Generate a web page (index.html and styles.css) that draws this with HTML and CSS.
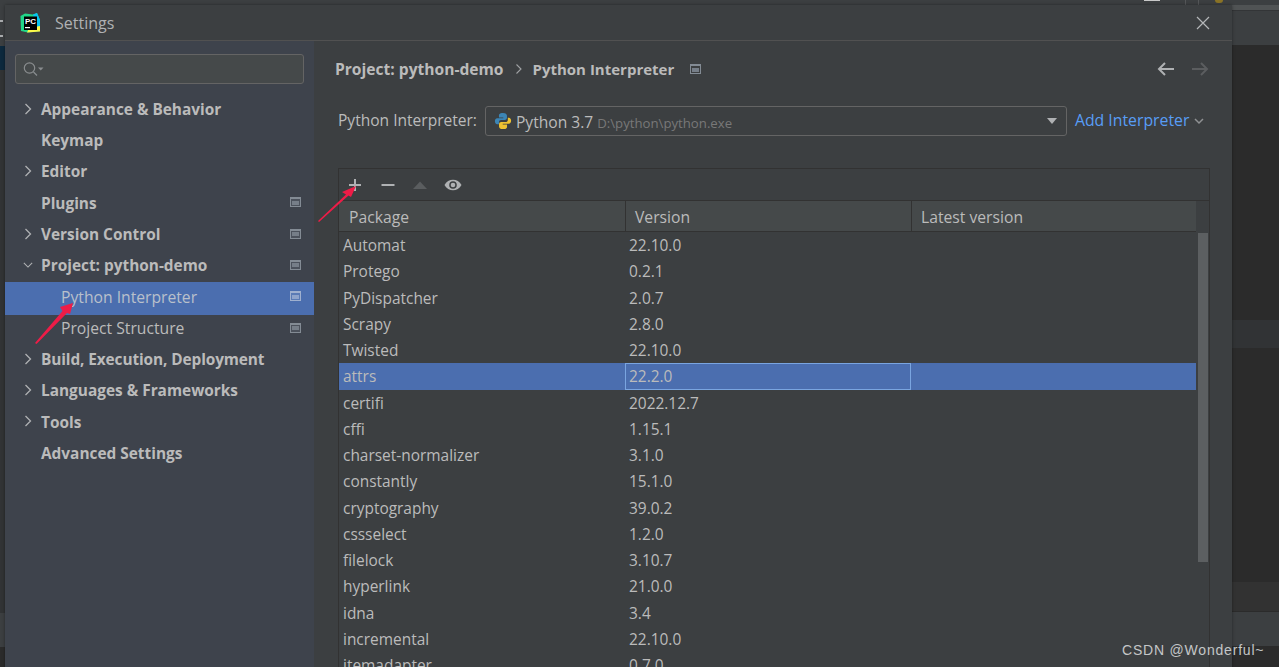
FILE: index.html
```html
<!DOCTYPE html>
<html lang="en">
<head>
<meta charset="utf-8">
<title>Settings</title>
<link rel="stylesheet" href="styles.css">
</head>
<body>
<div class="backdrop-top">
  <span class="t-bar"></span><span class="t-line one"></span><span class="t-line two"></span><span class="t-dot"></span>
</div>
<div class="backdrop-right">
  <div class="br-top"></div><div class="br-strip"></div><div class="br-head"></div><div class="br-dark a"></div><div class="br-band a"></div><div class="br-dark b"></div><div class="br-band b"></div><div class="br-light"></div><div class="br-dark c"></div>
</div>
<div class="backdrop-left">
  <div class="bl-a"><span class="bl-tick"></span><span class="bl-tick"></span></div><div class="bl-blue"></div><div class="bl-b"></div><div class="bl-c"></div><div class="bl-d"></div>
</div>
<main class="dialog">
  <header class="titlebar">
    <svg class="logo" viewBox="0 0 20 20" width="20" height="20">
      <path d="M0.500 3 L5 0.500 L13 1.500 L17 0 L20 7 L20 18 L8 19.500 L1 18 Z" fill="#21d789"/>
      <path d="M13 1.500 L17 0 L20 7 L20 15 L16 14 Z" fill="#07c3f2"/>
      <path d="M7 19.500 L20 18.500 L20 13 L9 15 Z" fill="#fcf84a"/>
      <rect x="4" y="3.500" width="13" height="13.500" fill="#000"/>
      <text x="5" y="10.500" class="logo-text">PC</text>
      <rect x="5" y="14" width="5" height="1.200" fill="#fff"/>
    </svg>
    <span class="title">Settings</span>
    <svg class="close" viewBox="0 0 14 14" width="14" height="14"><path d="M1 1 L13 13 M13 1 L1 13" stroke="#b4b6b8" stroke-width="1.2" fill="none"/></svg>
  </header>
  <div class="body">
    <nav class="sidebar">
      <div class="search">
        <svg viewBox="0 0 24 16" width="24" height="16"><circle cx="7.500" cy="7" r="5.200" stroke="#8a8d8f" stroke-width="1.200" fill="none"/><path d="M11.500 11 L15 14.500" stroke="#8a8d8f" stroke-width="1.300"/><path d="M16 6.500 h5.500 l-2.750 3 z" fill="#8a8d8f"/></svg>
      </div>
      <ul class="tree">
        <li class="node"><svg class="chev" viewBox="0 0 10 12"><path d="M2.500 1 L7.500 6 L2.500 11"/></svg><b>Appearance &amp; Behavior</b></li>
        <li class="node"><b>Keymap</b></li>
        <li class="node"><svg class="chev" viewBox="0 0 10 12"><path d="M2.500 1 L7.500 6 L2.500 11"/></svg><b>Editor</b></li>
        <li class="node"><b>Plugins</b><i class="proj"></i></li>
        <li class="node"><svg class="chev" viewBox="0 0 10 12"><path d="M2.500 1 L7.500 6 L2.500 11"/></svg><b>Version Control</b><i class="proj"></i></li>
        <li class="node"><svg class="chev" viewBox="0 0 12 10"><path d="M1 2.500 L6 7.500 L11 2.500"/></svg><b>Project: python-demo</b><i class="proj"></i></li>
        <li class="node sub selected"><span>Python Interpreter</span><i class="proj"></i></li>
        <li class="node sub"><span>Project Structure</span><i class="proj"></i></li>
        <li class="node"><svg class="chev" viewBox="0 0 10 12"><path d="M2.500 1 L7.500 6 L2.500 11"/></svg><b class="narrow">Build, Execution, Deployment</b></li>
        <li class="node"><svg class="chev" viewBox="0 0 10 12"><path d="M2.500 1 L7.500 6 L2.500 11"/></svg><b>Languages &amp; Frameworks</b></li>
        <li class="node"><svg class="chev" viewBox="0 0 10 12"><path d="M2.500 1 L7.500 6 L2.500 11"/></svg><b>Tools</b></li>
        <li class="node"><b>Advanced Settings</b></li>
      </ul>
    </nav>
    <section class="content">
      <div class="crumbs">
        <b class="crumb-a">Project: python-demo</b>
        <svg class="crumb-sep" viewBox="0 0 8 12" width="8" height="12"><path d="M1.500 1.500 L6 6 L1.500 10.500" stroke="#a0a2a4" stroke-width="1.100" fill="none"/></svg>
        <b class="crumb-b">Python Interpreter</b>
        <i class="proj crumb-proj"></i>
        <span class="spacer"></span>
        <svg viewBox="0 0 18 14" width="18" height="14"><path d="M17 7 H2 M8 1 L2 7 L8 13" stroke="#afb1b3" stroke-width="2" fill="none"/></svg>
        <svg class="fwd" viewBox="0 0 18 14" width="18" height="14"><path d="M1 7 H16 M10 1 L16 7 L10 13" stroke="#5b5d5f" stroke-width="2" fill="none"/></svg>
      </div>
      <div class="interp">
        <label>Python Interpreter:</label>
        <div class="combo">
          <svg viewBox="0 0 20 20" width="18" height="18"><path d="M10 1 C6 1 5.500 2.600 5.500 4 V6 H10.300 V7 H3.600 C1.800 7 1 8.600 1 10.300 C1 12 1.900 13.600 3.600 13.600 H5.500 V11.200 C5.500 9.800 6.600 8.800 8 8.800 H12 C13.300 8.800 14.400 7.800 14.400 6.400 V4 C14.400 2.400 13 1 10 1 Z" fill="#3c85b5"/><path d="M10 19 C14 19 14.500 17.400 14.500 16 V14 H9.700 V13 H16.400 C18.200 13 19 11.400 19 9.700 C19 8 18.100 6.400 16.400 6.400 H15.400 V8.800 C15.400 10.200 14.300 11.200 13 11.200 H8 C6.700 11.200 5.600 12.200 5.600 13.600 V16 C5.600 17.600 7 19 10 19 Z" fill="#eec232"/></svg>
          <span class="py">Python 3.7</span><span class="path">D:\python\python.exe</span>
          <span class="spacer"></span>
          <span class="caret"></span>
        </div>
        <a class="add">Add Interpreter</a>
        <svg class="add-chev" viewBox="0 0 10 7" width="10" height="7"><path d="M1 1 L5 5 L9 1" stroke="#8f9193" stroke-width="1.500" fill="none"/></svg>
      </div>
      <div class="panel">
        <div class="toolbar">
          <svg class="tool-add" viewBox="0 0 14 14" width="14" height="14"><path d="M7 1 V13 M1 7 H13" stroke="#afb1b3" stroke-width="2"/></svg>
          <svg class="tool-remove" viewBox="0 0 14 14" width="14" height="14"><path d="M0.500 7 H13.500" stroke="#afb1b3" stroke-width="2"/></svg>
          <svg class="tool-up" viewBox="0 0 16 14" width="16" height="14"><path d="M1 11 H15 L8 3.500 Z" fill="#5a5d5f"/></svg>
          <svg viewBox="0 0 18 14" width="18" height="14"><path d="M0.500 7 C4 0 14 0 17.500 7 C14 14 4 14 0.500 7 Z" fill="#afb1b3"/><circle cx="9" cy="7" r="3.800" fill="#3c3f41"/><circle cx="9" cy="7" r="2.300" fill="#afb1b3"/></svg>
        </div>
        <div class="thead">
          <div class="th c1">Package</div><div class="th c2">Version</div><div class="th c3">Latest version</div>
        </div>
        <div class="tbody">
          <div class="rows">
            <div class="row"><span class="c1">Automat</span><span class="c2">22.10.0</span></div>
            <div class="row"><span class="c1">Protego</span><span class="c2">0.2.1</span></div>
            <div class="row"><span class="c1">PyDispatcher</span><span class="c2">2.0.7</span></div>
            <div class="row"><span class="c1">Scrapy</span><span class="c2">2.8.0</span></div>
            <div class="row"><span class="c1">Twisted</span><span class="c2">22.10.0</span></div>
            <div class="row sel"><span class="c1">attrs</span><span class="c2 focus">22.2.0</span></div>
            <div class="row"><span class="c1">certifi</span><span class="c2">2022.12.7</span></div>
            <div class="row"><span class="c1">cffi</span><span class="c2">1.15.1</span></div>
            <div class="row"><span class="c1">charset-normalizer</span><span class="c2">3.1.0</span></div>
            <div class="row"><span class="c1">constantly</span><span class="c2">15.1.0</span></div>
            <div class="row"><span class="c1">cryptography</span><span class="c2">39.0.2</span></div>
            <div class="row"><span class="c1">cssselect</span><span class="c2">1.2.0</span></div>
            <div class="row"><span class="c1">filelock</span><span class="c2">3.10.7</span></div>
            <div class="row"><span class="c1">hyperlink</span><span class="c2">21.0.0</span></div>
            <div class="row"><span class="c1">idna</span><span class="c2">3.4</span></div>
            <div class="row"><span class="c1">incremental</span><span class="c2">22.10.0</span></div>
            <div class="row"><span class="c1">itemadapter</span><span class="c2">0.7.0</span></div>
          </div>
          <div class="scroll"><div class="thumb"></div></div>
        </div>
      </div>
    </section>
  </div>
</main>
<svg class="arrows" viewBox="0 0 1279 667" width="1279" height="667">
  <path d="M318 221 L346 194.500 L342 192 L356 186 L351 197 L348.500 195.500 L319 222 Z" fill="#ee1c47"/>
  <path d="M35 343 L62.500 311 L60 307 L73 303 L70 314 L67 313 L36.500 344 Z" fill="#ee1c47"/>
</svg>
<div class="watermark">CSDN @Wonderful~</div>
</body>
</html>
```

FILE: styles.css
```css
* { box-sizing: border-box; }
html, body { margin: 0; height: 100%; }
body {
  width: 1279px;
  height: 667px;
  overflow: hidden;
  background: #2b2b2b;
  padding: 5px 47px 0 5px;
  font-family: "Open Sans", "Noto Sans", sans-serif;
  font-size: 15.500px;
  color: #bbbbbb;
  position: relative;
}
.backdrop-top {
  position: absolute; left: 0; top: 0; width: 1279px; height: 5px;
  background: #3c3f41;
}
.t-bar { position: absolute; left: 1144px; top: 0; width: 16px; height: 1px; background: #c8c8c8; }
.t-line { position: absolute; top: 0; width: 1px; height: 5px; background: #555759; }
.t-line.one { left: 1185px; }
.t-line.two { left: 1198px; }
.t-dot { position: absolute; left: 1215px; top: 0; width: 8px; height: 3px; background: #8a7326; border-radius: 0 0 4px 4px; }
.backdrop-right {
  position: absolute; left: 1232px; top: 0; width: 47px; height: 667px;
  display: flex; flex-direction: column;
}
.br-top { height: 5px; background: #3c3f41; }
.br-strip { height: 6px; background: #505354; border-bottom: 1px solid #333537; }
.br-head { height: 34px; background: #3c3f41; }
.br-dark { background: #2b2b2b; }
.br-dark.a { height: 275px; }
.br-band.a { height: 28px; background: #313335; }
.br-dark.b { height: 234px; }
.br-band.b { height: 30px; background: #323232; border-bottom: 1px solid #2b2b2b; }
.br-light { height: 34px; background: #3c3f41; }
.br-dark.c { height: 21px; }
.backdrop-left {
  position: absolute; left: 0; top: 0; width: 5px; height: 667px;
  display: flex; flex-direction: column;
}
.bl-a { height: 46px; background: #3c3f41; padding-top: 20px; }
.bl-tick { display: block; width: 3px; height: 2px; background: #a9abad; margin-bottom: 13px; }
.bl-blue { height: 24px; background: #0d293e; }
.bl-b { height: 543px; background: #313335; }
.bl-c { height: 34px; background: #3c3f41; }
.bl-d { flex: 1; background: #2b2b2b; }

.dialog {
  position: relative;
  height: 700px;
  background: #3c3f41;
  display: flex; flex-direction: column;
  box-shadow: 0 0 3px rgba(0,0,0,.4);
}
.titlebar {
  height: 36px; flex: none;
  display: flex; align-items: center;
  padding: 0 22px 0 15px;
  border-bottom: 1px solid #515151;
}
.logo { flex: none; }
.logo-text { font: bold 8px "Liberation Sans", sans-serif; fill: #fff; }
.title { margin-left: 15px; font-size: 16px; color: #afb1b3; flex: 1; }
.body { flex: 1; display: flex; min-height: 0; }

.sidebar { width: 309px; flex: none; background: #3e434c; padding-top: 13px; }
.search {
  height: 30px; margin: 0 10px 0 10px;
  background: #45494a; border: 1px solid #646464; border-radius: 3px;
  display: flex; align-items: center; padding-left: 6px;
}
.tree { list-style: none; margin: 10.500px 0 0; padding: 0; }
.node {
  height: 31.300px; display: flex; align-items: center;
  padding: 0 0 2px 36px; position: relative; white-space: nowrap; color: #bbbbbb;
}
.node b { font-weight: 700; font-size: 15.400px; }
.node b.narrow { letter-spacing: -.1px; }
.sub { padding-left: 56px; font-size: 15.700px; }
.selected { background: #4b6eaf; box-shadow: 0 1px 0 #4b6eaf; }
.selected span { color: #b9c0cb; }
.chev { position: absolute; left: 18px; top: 8px; width: 10px; height: 12px; fill: none; stroke: #afb1b3; stroke-width: 1.300; }
.proj {
  position: absolute; right: 13px; top: 9px;
  width: 11px; height: 10px; border: 1px solid #838b94; border-top-width: 2px;
  background: #4c525c;
  display: flex; align-items: center; justify-content: center;
}
.proj::after { content: ""; width: 7px; height: 4px; background: #767e88; }
.selected .proj { border-color: #9fb0cf; background: #5b7bb5; }
.selected .proj::after { background: #8fa4cb; }

.content { flex: 1; min-width: 0; padding: 0 23px 0 24px; }
.crumbs {
  height: 56px; display: flex; align-items: center;
  margin-left: -3px;
}
.crumbs b { font-weight: 700; color: #bbbbbb; }
.crumbs .crumb-a { font-size: 15.600px; }
.crumbs .crumb-b { font-size: 15px; }
.crumb-sep { margin: 0 10px 0 11px; }
.crumb-proj { position: static; margin-left: 16px; background: #3c3f41; }
.spacer { flex: 1; }
.fwd { margin-left: 16px; }
.interp { display: flex; align-items: center; height: 30px; margin-top: 9px; }
.interp label { color: #bbbbbb; font-size: 15.550px; padding-bottom: 2px; }
.combo {
  width: 582px; height: 30px; margin-left: 8px;
  background: #3c3f41; border: 1px solid #646464; border-radius: 3px;
  display: flex; align-items: center; padding: 0 9px 0 8px;
}
.py { margin-left: 4px; font-size: 15.600px; padding-top: 2px; }
.path { margin-left: 4px; font-size: 13.200px; color: #787878; padding-top: 4px; }
.caret { width: 0; height: 0; border-left: 5.500px solid transparent; border-right: 5.500px solid transparent; border-top: 6px solid #afb1b3; }
.add { margin-left: 8px; color: #589df6; font-size: 15.800px; padding-bottom: 2px; }
.add-chev { margin-left: 5px; }

.panel {
  margin: 32px 0 0 0; width: 872px;
  border: 1px solid #323232; border-bottom: 0;
  display: flex; flex-direction: column;
}
.toolbar { height: 32px; display: flex; align-items: center; padding-left: 9px; border-bottom: 1px solid #323232; }
.tool-add { margin-right: 19px; }
.tool-remove { margin-right: 17px; }
.tool-up { margin-right: 16px; }
.thead { height: 31px; display: flex; background: #45494a; margin-right: 13px; border-bottom: 1px solid #323232; }
.th { width: 286px; padding-left: 9px; line-height: 32px; font-size: 15.700px; color: #bbbbbb; border-right: 1px solid #323232; }
.th.c1 { width: 287px; padding-left: 10px; }
.th.c3 { width: 284px; border-right: 0; }
.tbody { display: flex; }
.rows { width: 857px; flex: none; font-size: 15.450px; padding-top: .1px; }
.row { height: 26.250px; display: flex; align-items: center; white-space: nowrap; }
.row .c1 { width: 286px; padding-left: 4px; }
.row .c2 { width: 286px; padding-left: 4px; }
.sel { background: #4b6eaf; }
.focus { height: 100%; border: 1px solid #7aa5e0; padding-left: 3px !important; display: flex; align-items: center; }
.scroll { width: 13px; flex: none; padding: 1px 1px 0 2px; }
.thumb { width: 10px; height: 329px; background: #5c5f61; }

.arrows { position: absolute; left: 0; top: 0; pointer-events: none; }
.watermark {
  position: absolute; left: 1122px; top: 642px;
  font-family: "Liberation Sans", sans-serif; font-size: 14px; letter-spacing: .8px; color: #c4c6c7;
}
```
